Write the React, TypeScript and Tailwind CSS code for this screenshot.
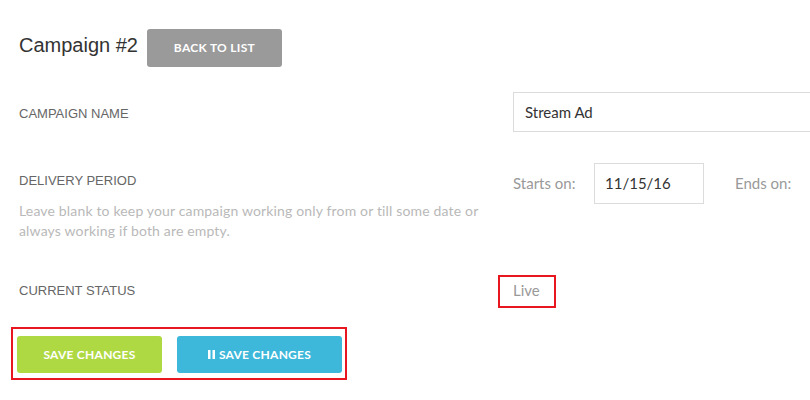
export default function App() {
  const lato = "font-['Lato','Open_Sans',sans-serif]";
  return (
    <div className="w-[810px] h-[400px] overflow-hidden bg-white font-['Liberation_Sans',Arial,sans-serif]">
      <div className="pl-[19px] pt-[29px]">
        {/* Header */}
        <div className="flex items-start h-[38px]">
          <h1 className="mt-[6px] text-[20px] leading-[20px] text-[#333] font-normal">Campaign #2</h1>
          <button
            className={`ml-[9px] w-[135px] h-[38px] rounded-[3px] bg-[#9a9a9a] text-white text-[12px] tracking-[0.3px] font-bold uppercase ${lato}`}
          >
            Back to list
          </button>
        </div>

        {/* Campaign name */}
        <div className="flex items-center mt-[25px] h-[40px]">
          <div className="w-[494px] shrink-0 text-[13px] leading-[15px] text-[#666] uppercase pt-[2px]">Campaign name</div>
          <div className={`w-[320px] shrink-0 h-[40px] border border-[#dcdcdc] pl-[11px] flex items-center text-[15px] text-[#333] ${lato}`}>
            Stream Ad
          </div>
        </div>

        {/* Delivery period */}
        <div className="flex items-start mt-[31px]">
          <div className="w-[494px] shrink-0 pt-[10px]">
            <div className="text-[13px] leading-[15px] text-[#666] uppercase">Delivery period</div>
            <p className={`mt-[13px] w-[472px] text-[14px] leading-[20px] tracking-[0.16px] text-[#b9b9b9] ${lato}`}>
              Leave blank to keep your campaign working only from or till some date or always working if both are empty.
            </p>
          </div>
          <div className={`flex items-center shrink-0 text-[15px] ${lato}`}>
            <span className="w-[81px] text-[#999]">Starts on:</span>
            <div className="w-[110px] h-[41px] border border-[#dcdcdc] pl-[10px] flex items-center text-[#333]">11/15/16</div>
            <span className="ml-[31px] text-[#999]">Ends on:</span>
          </div>
        </div>

        {/* Current status */}
        <div className="flex items-start mt-[38px]">
          <div className="w-[494px] shrink-0 pt-[4px] text-[13px] leading-[15px] text-[#666] uppercase">Current status</div>
          <div className="relative">
            <span className={`text-[15px] leading-[18px] text-[#999] ${lato}`}>Live</span>
            <span className="absolute -left-[15px] -top-[4px] w-[58px] h-[33px] border-2 border-[#e8161e]" />
          </div>
        </div>

        {/* Buttons */}
        <div className="relative mt-[33px] ml-[-2px] flex gap-[15px] w-fit">
          <button
            className={`w-[145px] h-[37px] rounded-[3px] bg-[#afd943] text-white text-[12px] tracking-[0.25px] font-bold uppercase ${lato}`}
          >
            Save changes
          </button>
          <button
            className={`w-[165px] h-[37px] rounded-[3px] bg-[#3db8da] text-white text-[12px] tracking-[0.25px] font-bold uppercase flex items-center justify-center gap-[4px] ${lato}`}
          >
            <svg width="7" height="9" viewBox="0 0 7 9" className="shrink-0">
              <rect x="0" y="0" width="2.5" height="9" fill="white" />
              <rect x="4.5" y="0" width="2.5" height="9" fill="white" />
            </svg>
            Save changes
          </button>
          <span className="absolute -left-[6px] -top-[9px] -right-[5px] -bottom-[7px] border-2 border-[#e8161e] pointer-events-none" />
        </div>
      </div>
    </div>
  );
}
